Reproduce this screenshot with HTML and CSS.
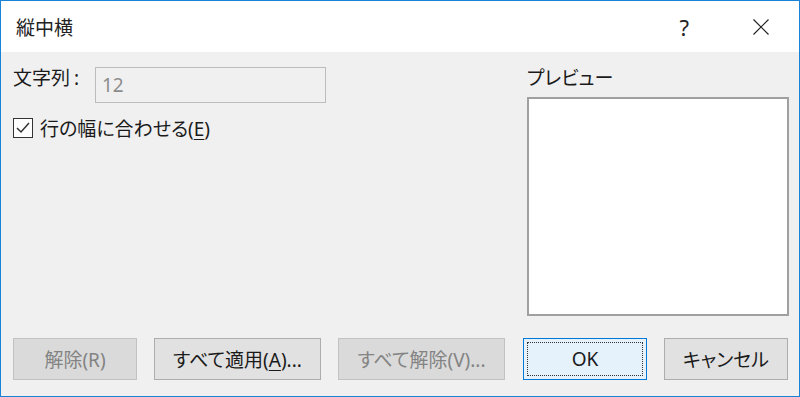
FILE: index.html
```html
<!DOCTYPE html>
<html lang="ja">
<head>
    <meta charset="UTF-8">
    <title>縦中横</title>
    <link rel="stylesheet" href="styles.css">
</head>
<body>
    <div class="window">
        <div class="titlebar">
            <span class="title">縦中横</span>
            <span class="help">?</span>
            <span class="close">
                <svg width="16" height="16" viewBox="0 0 16 16">
                    <path d="M0.5 0.5 L15.5 15.5 M15.5 0.5 L0.5 15.5" stroke="#222" stroke-width="1.2" fill="none"/>
                </svg>
            </span>
        </div>
        <div class="content">
            <div class="main">
                <div class="left">
                    <div class="field-row">
                        <label class="field-label">文字列<span class="colon">:</span></label>
                        <div class="input disabled">12</div>
                    </div>
                    <div class="check-row">
                        <svg class="checkbox" width="20" height="20" viewBox="0 0 20 20">
                            <rect x="0.5" y="0.5" width="19" height="19" fill="#fff" stroke="#333"/>
                            <path d="M4 10 L8 14 L16 5" stroke="#333" stroke-width="1.5" fill="none"/>
                        </svg>
                        <span>行の幅に合わせる(<u>E</u>)</span>
                    </div>
                </div>
                <div class="right">
                    <div class="preview-label">プレビュー</div>
                    <div class="preview"></div>
                </div>
            </div>
            <div class="buttons">
                <button class="btn small" disabled>解除(R)</button>
                <button class="btn wide">すべて適用(<u>A</u>)...</button>
                <button class="btn wide" disabled>すべて解除(V)...</button>
                <button class="btn small default"><span class="focus">OK</span></button>
                <button class="btn small">キャンセル</button>
            </div>
        </div>
    </div>
</body>
</html>
```

FILE: styles.css
```css
* {
    box-sizing: border-box;
}
body {
    margin: 0;
    font-family: "Noto Sans", "Noto Sans CJK JP", sans-serif;
    font-size: 19px;
    font-feature-settings: "palt";
    color: #1a1a1a;
}
.window {
    width: 800px;
    height: 397px;
    border: 1px solid #1883d7;
    display: flex;
    flex-direction: column;
}
.titlebar {
    height: 51px;
    background-color: #ffffff;
    display: flex;
    align-items: center;
    padding-left: 15px;
}
.title {
    font-size: 19px;
    color: #222;
    flex: 1;
    font-feature-settings: normal;
}
.help {
    font-size: 22px;
    margin-right: 64px;
    color: #222;
}
.close {
    display: flex;
    margin-right: 30px;
}
.content {
    flex: 1;
    background-color: #f0f0f0;
    padding: 15px 10px 0 11px;
    display: flex;
    flex-direction: column;
}
.main {
    display: flex;
    justify-content: space-between;
}
.field-row {
    display: flex;
    align-items: flex-start;
}
.field-label {
    line-height: 22px;
    width: 83px;
    padding-left: 1px;
    font-feature-settings: normal;
}
.colon {
    padding-left: 4px;
}
.input {
    width: 231px;
    height: 36px;
    border: 1px solid #bcbcbc;
    padding-left: 6px;
    line-height: 34px;
    font-size: 19px;
}
.input.disabled {
    color: #8d8d8d;
    background-color: #f0f0f0;
}
.check-row {
    display: flex;
    align-items: center;
    margin-top: 15px;
    height: 20px;
    padding-left: 1px;
}
.checkbox {
    margin-right: 7px;
}
.right {
    width: 262px;
}
.preview-label {
    line-height: 22px;
    margin-bottom: 8px;
}
.preview {
    height: 219px;
    background-color: #ffffff;
    border: 2px solid #a0a0a0;
}
.buttons {
    display: flex;
    gap: 17px;
    margin-top: 22px;
    padding-left: 1px;
}
.btn {
    height: 42px;
    font-family: inherit;
    font-size: 19px;
    font-feature-settings: "palt";
    color: #1a1a1a;
    background-color: #e1e1e1;
    border: 1px solid #adadad;
    padding: 0;
}
.btn.small {
    width: 124px;
}
.btn.wide {
    width: 167px;
}
.btn:disabled {
    color: #838383;
    background-color: #dadada;
    border-color: #c2c2c2;
}
.btn.default {
    background-color: #e5f1fb;
    border-color: #0078d7;
    padding: 3px;
    margin-left: 1px;
}
.focus {
    display: flex;
    align-items: center;
    justify-content: center;
    height: 100%;
    border: 1px dotted #333;
}
u {
    text-underline-offset: 3px;
}
```
